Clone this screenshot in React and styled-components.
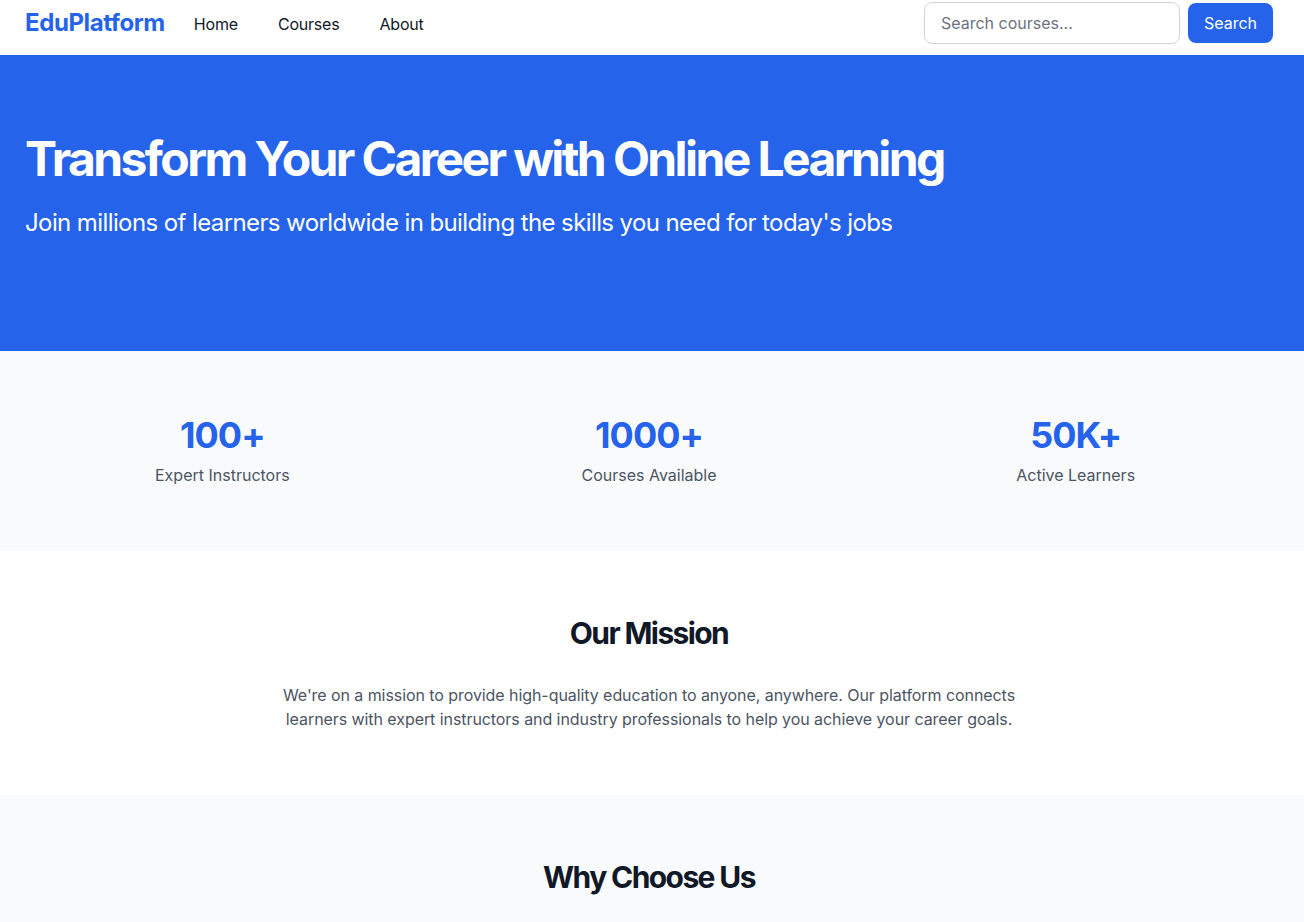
import React, { useState } from 'react'
import styled, { createGlobalStyle } from 'styled-components'

const GlobalStyle = createGlobalStyle`
  * { box-sizing: border-box; }
  body {
    margin: 0;
    font-family: Inter, "Liberation Sans", sans-serif;
    background: #ffffff;
    color: #111827;
  }
`

const stats = [
  { id: 1, value: '100+', label: 'Expert Instructors' },
  { id: 2, value: '1000+', label: 'Courses Available' },
  { id: 3, value: '50K+', label: 'Active Learners' },
]

export default function App() {
  const [query, setQuery] = useState('')

  return (
    <>
      <GlobalStyle />
      <Nav>
        <Container>
          <NavBar>
            <NavLeft>
              <Logo>EduPlatform</Logo>
              <NavLinks>
                <NavLink href="#">Home</NavLink>
                <NavLink href="#">Courses</NavLink>
                <NavLink href="#">About</NavLink>
              </NavLinks>
            </NavLeft>
            <SearchForm onSubmit={(e) => e.preventDefault()}>
              <SearchInput
                placeholder="Search courses..."
                value={query}
                onChange={(e) => setQuery(e.target.value)}
              />
              <SearchButton type="submit">Search</SearchButton>
            </SearchForm>
          </NavBar>
        </Container>
      </Nav>

      <Hero>
        <Container>
          <HeroTitle>Transform Your Career with Online Learning</HeroTitle>
          <HeroText>Join millions of learners worldwide in building the skills you need for today's jobs</HeroText>
        </Container>
      </Hero>

      <Section $muted>
        <Container>
          <StatsGrid>
            {stats.map((s) => (
              <Stat key={s.id}>
                <StatValue>{s.value}</StatValue>
                <StatLabel>{s.label}</StatLabel>
              </Stat>
            ))}
          </StatsGrid>
        </Container>
      </Section>

      <Section>
        <Container>
          <SectionTitle>Our Mission</SectionTitle>
          <MissionText>
            We're on a mission to provide high-quality education to anyone, anywhere. Our platform connects
            learners with expert instructors and industry professionals to help you achieve your career goals.
          </MissionText>
        </Container>
      </Section>

      <Section $muted>
        <Container>
          <SectionTitle>Why Choose Us</SectionTitle>
        </Container>
      </Section>
    </>
  )
}

const Container = styled.div`
  max-width: 1280px;
  margin: 0 15px 0 9px;
  padding: 0 16px;
`
const Nav = styled.nav`
  background: #ffffff;
  padding: 2px 0 11px;
`
const NavBar = styled.div`
  display: flex;
  align-items: center;
  justify-content: space-between;
  height: 42px;
`
const NavLeft = styled.div`
  display: flex;
  align-items: center;
  gap: 29px;
`
const Logo = styled.div`
  font-size: 24px;
  line-height: 32px;
  font-weight: 700;
  letter-spacing: -0.4px;
  color: #2563eb;
`
const NavLinks = styled.div`
  display: flex;
  gap: 40px;
  padding-top: 2px;
`
const NavLink = styled.a`
  font-size: 16px;
  line-height: 24px;
  color: #111827;
  text-decoration: none;
  letter-spacing: -0.2px;
`
const SearchForm = styled.form`
  display: flex;
  align-items: center;
  gap: 8px;
`
const SearchInput = styled.input`
  width: 256px;
  height: 42px;
  padding: 0 16px;
  border: 1px solid #d1d5db;
  border-radius: 8px;
  font-family: inherit;
  font-size: 16px;
  color: #111827;
  outline: none;
  &::placeholder { color: #6b7280; }
`
const SearchButton = styled.button`
  height: 40px;
  padding: 0 16px;
  border: none;
  border-radius: 8px;
  background: #2563eb;
  color: #ffffff;
  font-family: inherit;
  font-size: 16px;
  cursor: pointer;
`
const Hero = styled.section`
  background: #2563eb;
  color: #ffffff;
  padding: 80px 0 112px;
`
const HeroTitle = styled.h1`
  margin: 0 0 24px;
  font-size: 48px;
  line-height: 48px;
  font-weight: 700;
  letter-spacing: -2.6px;
`
const HeroText = styled.p`
  margin: 0;
  font-size: 24px;
  line-height: 32px;
  letter-spacing: -0.6px;
`
const Section = styled.section`
  background: ${(p) => (p.$muted ? '#f9fafb' : '#ffffff')};
  padding: 64px 0;
  text-align: center;
`
const StatsGrid = styled.div`
  display: grid;
  grid-template-columns: repeat(3, 1fr);
  gap: 32px;
`
const Stat = styled.div`
  display: flex;
  flex-direction: column;
  align-items: center;
  gap: 8px;
`
const StatValue = styled.div`
  font-size: 36px;
  line-height: 40px;
  font-weight: 700;
  letter-spacing: -1px;
  color: #2563eb;
`
const StatLabel = styled.div`
  font-size: 16px;
  line-height: 24px;
  color: #4b5563;
`
const SectionTitle = styled.h2`
  margin: 0;
  font-size: 30px;
  line-height: 36px;
  font-weight: 700;
  letter-spacing: -1.6px;
  color: #111827;
`
const MissionText = styled.p`
  max-width: 768px;
  margin: 32px auto 0;
  font-size: 16px;
  line-height: 24px;
  letter-spacing: -0.07px;
  color: #4b5563;
`
